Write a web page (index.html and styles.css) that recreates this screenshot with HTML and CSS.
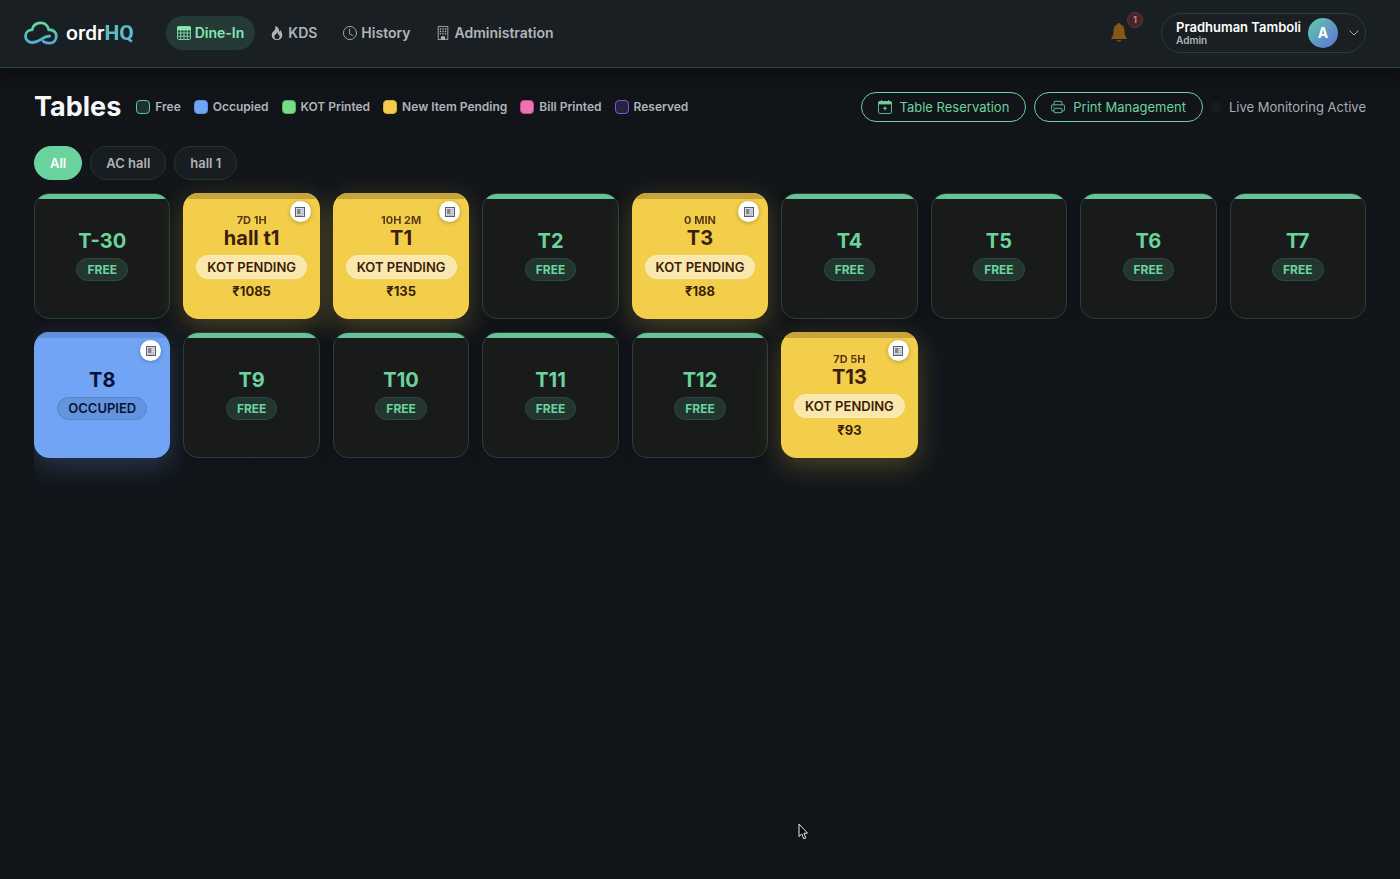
FILE: index.html
```html
<!DOCTYPE html>
<html lang="en">
<head>
<meta charset="utf-8">
<meta name="viewport" content="width=device-width, initial-scale=1">
<title>ordrHQ – Tables</title>
<link rel="stylesheet" href="styles.css">
</head>
<body>
<svg class="sprite" aria-hidden="true">
  <symbol id="receipt" viewBox="0 0 10 10">
    <rect x=".5" y=".5" width="9" height="9" fill="#dcdee2" stroke="#5b6067"/>
    <rect x="2" y="2" width="3.500" height="5" fill="#85829a"/>
    <path d="M6.500 2.500h2M6.500 4.500h2M6.500 6.500h2M2 8.200h6" stroke="#9a9ea5" stroke-width=".8"/>
  </symbol>
</svg>

<header class="topbar">
  <a class="brand" href="#">
    <svg class="brand-mark" viewBox="0 0 34 24" fill="none" aria-hidden="true">
      <defs><linearGradient id="cloud" x1="0" y1="0" x2="0" y2="24" gradientUnits="userSpaceOnUse"><stop stop-color="#6fdd9c"/><stop offset=".5" stop-color="#55c5b5"/><stop offset="1" stop-color="#55a5e0"/></linearGradient></defs>
      <path d="M25.600 15.200C18.500 14.800 16.500 21.500 8.300 21.500 4.500 21.500 1.500 18.800 1.500 15.200c0-3.500 2.800-6.200 6.600-6.300C8.500 4.800 12 1.800 16.500 1.800c4.300 0 7.600 2.800 8.200 7 4.300-.3 7.600 2.300 7.600 6.200 0 4.200-2.800 7.200-6.800 7.200-2.600 0-4.300-.7-6.300-1.700" stroke="url(#cloud)" stroke-width="2.800" stroke-linecap="round" stroke-linejoin="round"/>
    </svg>
    <span class="brand-name">ordr<b>HQ</b></span>
  </a>
  <nav class="nav">
    <a class="nav-link active" href="#">
      <svg class="icon" viewBox="0 0 16 16" fill="none" stroke="currentColor" aria-hidden="true"><rect x=".6" y=".6" width="14.800" height="14.800" rx="1.500"/><path d="M.6 1h14.800v3.600H.6z" fill="currentColor"/><path d="M1 8h14M1 11.700h14M4.300 4v11M8 4v11M11.700 4v11"/></svg>
      Dine-In</a>
    <a class="nav-link" href="#">
      <svg class="icon" viewBox="0 0 16 16" fill="currentColor" aria-hidden="true"><path d="M8 16c3.314 0 6-2 6-5.500 0-1.500-.5-4-2.500-6 .25 1.500-1.250 2-1.250 2C11 4 9 .5 6 0c.357 2 .5 4-2 6-1.250 1-2 2.729-2 4.500C2 14 4.686 16 8 16m0-1c-1.657 0-3-1-3-2.750 0-.75.25-2 1.250-3C6.125 10 7 10.500 7 10.500c-.375-1.250.5-3.250 2-3.500-.179 1-.25 2 1 3 .625.5 1 1.364 1 2.250C11 14 9.657 15 8 15"/></svg>
      KDS</a>
    <a class="nav-link" href="#">
      <svg class="icon" viewBox="0 0 16 16" fill="none" stroke="currentColor" stroke-linecap="round" aria-hidden="true"><circle cx="8" cy="8" r="7.500"/><path d="M7.500 3.500V9l3.500 2"/></svg>
      History</a>
    <a class="nav-link" href="#">
      <svg class="icon" viewBox="0 0 16 16" fill="none" stroke="currentColor" aria-hidden="true"><path d="M2.500.5h11v15h-3.700v-3H6.200v3H2.500z"/><path d="M4.300 3.500h1.600M7.200 3.500h1.600M10.100 3.500h1.600M4.300 6.200h1.600M7.200 6.200h1.600M10.100 6.200h1.600M4.300 9h1.600M7.200 9h1.600M10.100 9h1.600" stroke-width="1.600"/><path d="M6.200 12.500h3.600v3H6.200z" fill="currentColor"/></svg>
      Administration</a>
  </nav>
  <div class="account">
    <button class="bell" type="button" aria-label="Notifications, 1 unread">
      <svg viewBox="0 0 16 19" aria-hidden="true"><path d="M8 0c-.9 0-1.500.6-1.500 1.500C3.900 2.200 2.600 4.300 2.600 7c0 4-.5 6.200-2.300 8v1h15.400v-1c-1.800-1.800-2.300-4-2.300-8 0-2.700-1.300-4.800-3.900-5.500C9.500.6 8.900 0 8 0z" fill="#855717"/><path d="M5.500 17h5c-.3 1-1.200 1.700-2.500 1.700S5.800 18 5.500 17z" fill="#6e4a1c"/></svg>
      <span class="badge">1</span>
    </button>
    <button class="profile" type="button">
      <span class="who"><strong>Pradhuman Tamboli</strong><small>Admin</small></span>
      <span class="avatar">A</span>
      <svg class="chevron" viewBox="0 0 10 6" fill="none" stroke="#a4a9af" stroke-linecap="round" stroke-linejoin="round" aria-hidden="true"><path d="M.8.8 5 5 9.200.8"/></svg>
    </button>
  </div>
</header>

<main class="page">
  <div class="heading">
    <h1>Tables</h1>
    <ul class="legend">
      <li><i class="swatch sw-free"></i>Free</li>
      <li><i class="swatch sw-occupied"></i>Occupied</li>
      <li><i class="swatch sw-kot"></i>KOT Printed</li>
      <li><i class="swatch sw-new"></i>New Item Pending</li>
      <li><i class="swatch sw-bill"></i>Bill Printed</li>
      <li><i class="swatch sw-reserved"></i>Reserved</li>
    </ul>
    <div class="actions">
      <button class="outline" type="button">
        <svg class="icon" viewBox="0 0 16 16" fill="none" stroke="currentColor" aria-hidden="true"><rect x=".6" y="1.700" width="14.800" height="13.700" rx="1.500"/><path d="M1 2h14v2.500H1z" fill="currentColor"/><path d="M4 0v2M12 0v2"/><path d="M8 7.300v4.400M5.800 9.500h4.400" stroke-width="1.200"/></svg>
        Table Reservation</button>
      <button class="outline" type="button">
        <svg class="icon" viewBox="0 0 16 16" fill="none" stroke="currentColor" aria-hidden="true"><path d="M3.500 5V2.500a1 1 0 0 1 1-1h7a1 1 0 0 1 1 1V5M3.500 12.500H2a1.500 1.500 0 0 1-1.500-1.500V7A1.500 1.500 0 0 1 2 5.500h12A1.500 1.500 0 0 1 15.500 7v4a1.500 1.500 0 0 1-1.500 1.500h-1.500"/><rect x="3.500" y="9.500" width="9" height="5" rx="1"/><path d="M2.500 7.800h1"/></svg>
        Print Management</button>
      <span class="live"><i class="dot"></i>Live Monitoring Active</span>
    </div>
  </div>

  <div class="tabs">
    <button class="tab selected" type="button">All</button>
    <button class="tab" type="button">AC hall</button>
    <button class="tab" type="button">hall 1</button>
  </div>

  <section class="grid" aria-label="Tables">
    <article class="card free"><h2>T-30</h2><span class="status">FREE</span></article>
    <article class="card pending"><button class="view" type="button" aria-label="View bill"><svg><use href="#receipt"/></svg></button><span class="time">7D 1H</span><h2>hall t1</h2><span class="status">KOT PENDING</span><span class="amount">₹1085</span></article>
    <article class="card pending"><button class="view" type="button" aria-label="View bill"><svg><use href="#receipt"/></svg></button><span class="time">10H 2M</span><h2>T1</h2><span class="status">KOT PENDING</span><span class="amount">₹135</span></article>
    <article class="card free"><h2>T2</h2><span class="status">FREE</span></article>
    <article class="card pending"><button class="view" type="button" aria-label="View bill"><svg><use href="#receipt"/></svg></button><span class="time">0 MIN</span><h2>T3</h2><span class="status">KOT PENDING</span><span class="amount">₹188</span></article>
    <article class="card free"><h2>T4</h2><span class="status">FREE</span></article>
    <article class="card free"><h2>T5</h2><span class="status">FREE</span></article>
    <article class="card free"><h2>T6</h2><span class="status">FREE</span></article>
    <article class="card free"><h2>T7</h2><span class="status">FREE</span></article>
    <article class="card occupied"><button class="view" type="button" aria-label="View bill"><svg><use href="#receipt"/></svg></button><h2>T8</h2><span class="status">OCCUPIED</span></article>
    <article class="card free"><h2>T9</h2><span class="status">FREE</span></article>
    <article class="card free"><h2>T10</h2><span class="status">FREE</span></article>
    <article class="card free"><h2>T11</h2><span class="status">FREE</span></article>
    <article class="card free"><h2>T12</h2><span class="status">FREE</span></article>
    <article class="card pending"><button class="view" type="button" aria-label="View bill"><svg><use href="#receipt"/></svg></button><span class="time">7D 5H</span><h2>T13</h2><span class="status">KOT PENDING</span><span class="amount">₹93</span></article>
  </section>
</main>

<svg class="pointer" viewBox="0 0 10 17" aria-hidden="true"><path d="M1 1v12.500l2.800-2.600 2 4.900 2.100-.9-2-4.700h3.600z" fill="#050607" stroke="#e8e8e8" stroke-linejoin="round"/></svg>
</body>
</html>
```
FILE: styles.css
```css
* { box-sizing: border-box; }

body {
  margin: 0;
  min-height: 100vh;
  background: linear-gradient(#0f1115, #12151a 160px, #11151a);
  color: #f3f4f6;
  font: 14px/20px Inter, "Noto Sans", sans-serif;
}

button { font: inherit; color: inherit; background: none; border: 0; padding: 0; cursor: pointer; }
a { color: inherit; text-decoration: none; }
.sprite { position: absolute; width: 0; height: 0; }
.icon { width: 14px; height: 14px; flex: none; }

.topbar {
  display: flex;
  align-items: center;
  height: 68px;
  padding: 0 34px 2px 24px;
  background: #1a1f23;
  border-bottom: 1px solid #2e4542;
  box-shadow: 0 4px 14px rgba(0, 0, 0, .35);
}

.brand { display: flex; align-items: center; gap: 8px; margin-right: 32px; }
.brand-mark { width: 34px; height: 24px; }
.brand-name { font: 500 21px/24px Roboto, Inter, sans-serif; color: #fff; }
.brand-name b {
  font-weight: 800;
  background: linear-gradient(#55c5b0, #5ab4dc);
  background-clip: text;
  color: transparent;
}

.nav { display: flex; gap: 4px; }
.nav-link {
  display: flex;
  align-items: center;
  gap: 4px;
  height: 34px;
  padding: 0 11px;
  border-radius: 17px;
  color: #b0b5ba;
  font-weight: 600;
}
.nav-link.active { background: #253a36; color: #86e8b2; }

.account { display: flex; align-items: center; gap: 34px; margin-left: auto; }
.bell { position: relative; display: flex; }
.bell svg { width: 16px; height: 19px; }
.badge {
  position: absolute;
  left: 16px;
  top: -11px;
  width: 16px;
  height: 16px;
  border: 1px solid #67343b;
  border-radius: 50%;
  background: #41262b;
  color: #d97c7c;
  font-size: 9px;
  font-weight: 700;
  line-height: 14px;
  text-align: center;
}

.profile {
  display: flex;
  align-items: center;
  height: 40px;
  padding: 0 6px 0 14px;
  border: 1px solid #2a3e3d;
  border-radius: 20px;
  background: #191f23;
}
.who { display: flex; flex-direction: column; text-align: left; }
.who strong { font-size: 13px; font-weight: 600; line-height: 14px; color: #fff; }
.who small { font-size: 10px; font-weight: 600; line-height: 12px; color: #b0b5ba; }
.avatar {
  width: 30px;
  height: 30px;
  margin: 0 11px 0 7px;
  border-radius: 50%;
  background: linear-gradient(135deg, #62cda4, #5d6fdc);
  color: #fff;
  font-weight: 700;
  line-height: 30px;
}
.chevron { width: 10px; height: 6px; }

.page { padding: 24px 34px; }
.heading { display: flex; align-items: center; gap: 15px; height: 30px; }
h1 { margin: 0; font-size: 27px; font-weight: 700; line-height: 30px; color: #f6f7f9; }

.legend {
  display: flex;
  gap: 13px;
  margin: 0;
  padding: 0;
  list-style: none;
  color: #b0b4b9;
  font-size: 12px;
  font-weight: 600;
}
.legend li { display: flex; align-items: center; gap: 5px; }
.swatch { width: 14px; height: 14px; border: 1px solid; border-radius: 4px; }
.sw-free { background: #20322f; border-color: #63c795; }
.sw-occupied { background: #72a4f5; border-color: #5b8fe8; }
.sw-kot { background: #7bdc88; border-color: #46b862; }
.sw-new { background: #f3ce4a; border-color: #dfae2c; }
.sw-bill { background: #ea75b2; border-color: #d4447f; }
.sw-reserved { background: #282141; border-color: #7d59d8; }

.actions { display: flex; align-items: center; gap: 8px; margin-left: auto; font-size: 13px; }
.outline {
  display: flex;
  align-items: center;
  gap: 8px;
  height: 30px;
  padding: 0 16px;
  border: 1px solid #6cd39e;
  border-radius: 15px;
  color: #6cd39e;
}
.live { display: flex; align-items: center; gap: 8px; color: #a9adb3; }
.dot { width: 10px; height: 10px; border-radius: 50%; background: #151d20; }

.tabs { display: flex; gap: 8px; margin: 24px 0 13px; }
.tab {
  height: 34px;
  padding: 0 15px;
  border: 1px solid #273532;
  border-radius: 17px;
  background: #181d21;
  color: #aeb3b8;
  font-size: 13px;
  font-weight: 600;
}
.tab.selected { background: #6bd39d; border-color: #6bd39d; color: #fff; }

.grid {
  display: grid;
  grid-template-columns: repeat(auto-fill, minmax(130px, 1fr));
  gap: 13px;
  padding-bottom: 32px;
  overflow-x: clip;
}

.card {
  position: relative;
  display: flex;
  flex-direction: column;
  align-items: center;
  justify-content: center;
  min-height: 126px;
  padding-bottom: 2px;
  border: 1px solid;
  border-radius: 15px;
}
.card::before {
  content: "";
  position: absolute;
  inset: -1px;
  border-radius: 15px;
  background: linear-gradient(var(--strip) 6px, transparent 6px);
}
.card > * { position: relative; }
.card h2 { margin: 0; font-size: 20px; font-weight: 700; line-height: 24px; }
.status {
  margin-top: 5px;
  padding: 0 10px;
  border: 1px solid;
  border-radius: 12px;
  font-size: 12px;
  font-weight: 700;
  line-height: 21px;
}

.free {
  --strip: #67c295;
  background: #181b1a;
  border-color: #27403a;
  color: #6bd39d;
  box-shadow: 0 4px 16px rgba(0, 0, 0, .15);
}
.free::before { inset: 0; border-radius: 14px; background: linear-gradient(var(--strip) 5px, transparent 5px); }
.free .status { background: #22352f; border-color: #2b4a40; }

.pending {
  --strip: #c8a43c;
  padding-bottom: 0;
  background: #f3ce4a;
  border-color: #f3ce4a;
  color: #3b1e0b;
  box-shadow: 0 8px 28px rgba(243, 206, 74, .25);
}
.pending .status { background: #fae7ad; border-color: #fbedc3; line-height: 22px; }
.pending .status, .occupied .status { padding: 0 10px; font-size: 13px; font-weight: 600; }
.time { font-size: 11px; font-weight: 700; line-height: 12px; opacity: .85; }
.amount { margin-top: 4px; font-size: 13px; font-weight: 700; line-height: 16px; }

.occupied {
  --strip: #6391d9;
  background: #72a4f5;
  border-color: #72a4f5;
  color: #081333;
  box-shadow: 0 8px 28px rgba(114, 164, 245, .25);
}
.occupied .status { background: #6594de; border-color: #5684c8; }

.card .view {
  position: absolute;
  top: 7px;
  right: 8px;
  display: grid;
  place-items: center;
  width: 21px;
  height: 21px;
  border-radius: 50%;
  background: #fff;
  box-shadow: 0 1px 4px rgba(0, 0, 0, .25);
}
.view svg { width: 10px; height: 10px; }

.pointer { position: fixed; left: 798px; top: 823px; width: 10px; height: 17px; }
```
